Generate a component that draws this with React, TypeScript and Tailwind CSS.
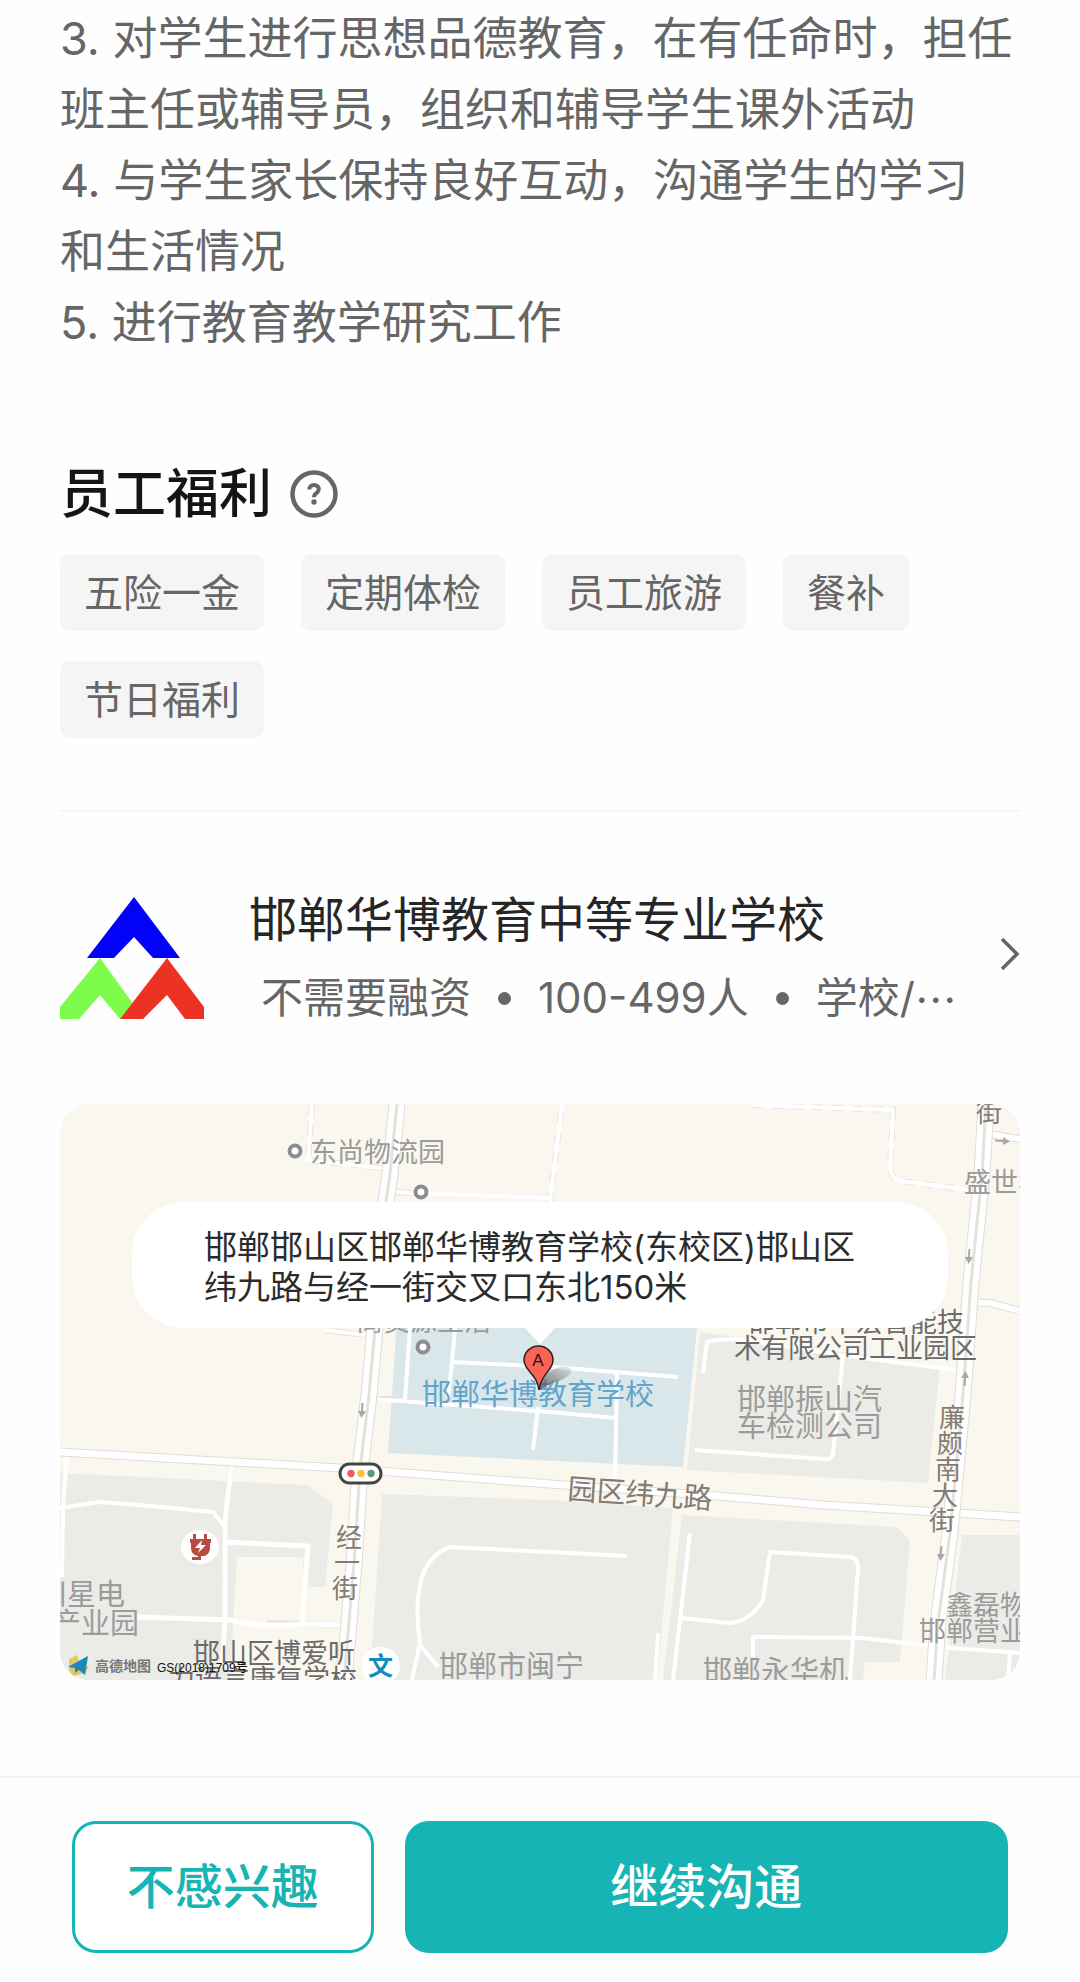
import type { ReactNode } from "react";

const duties = [
  "3. 对学生进行思想品德教育，在有任命时，担任班主任或辅导员，组织和辅导学生课外活动",
  "4. 与学生家长保持良好互动，沟通学生的学习\n和生活情况",
  "5. 进行教育教学研究工作",
];

const benefits = ["五险一金", "定期体检", "员工旅游", "餐补", "节日福利"];

function HelpIcon() {
  return (
    <svg viewBox="0 0 48 48" className="size-12" fill="none" stroke="#666" aria-hidden="true">
      <circle cx="24" cy="24" r="21.5" strokeWidth="4.5" />
      <path d="M19.300 19.6c0-2.900 2-4.700 4.700-4.700s4.700 1.700 4.700 4.300c0 2.1-1.1 3-2.6 4.1-1.5 1-2.1 1.800-2.1 3.900" strokeWidth="4" />
      <circle cx="24" cy="32" r="2.700" fill="#666" stroke="none" />
    </svg>
  );
}

function SchoolLogo() {
  return (
    <svg viewBox="0 0 144 123" className="w-36 shrink-0" aria-hidden="true">
      <path d="M74 0 120 61H93L74 40 54 61H27Z" fill="#0202f8" />
      <path d="M40 61 84 122H60L40 98 19 122H0V110Z" fill="#7dfc4b" />
      <path d="M107 61 144 110V122H125L107 98 83 122H60Z" fill="#ec3323" />
    </svg>
  );
}

function Road({ d, width = 16, center = true }: { d: string; width?: number; center?: boolean }) {
  return (
    <g fill="none">
      <path d={d} stroke="#dedcd5" strokeWidth={width} />
      <path d={d} stroke="#fff" strokeWidth={width - 2} />
      {center && <path d={d} stroke="#e4e2dc" strokeWidth={3} />}
    </g>
  );
}

function Arrow({ x, y, turn }: { x: number; y: number; turn: number }) {
  return (
    <path
      d="M-7 -1H1V-4L8 0 1 4V1H-7Z"
      fill="#a9a7a2"
      transform={`translate(${x} ${y}) rotate(${turn})`}
    />
  );
}

function Poi({ x, y }: { x: number; y: number }) {
  return <circle cx={x} cy={y} r="5.500" fill="#fff" stroke="#8b8d90" strokeWidth="4" />;
}

function MapLabels({ children, fill }: { children: ReactNode; fill: string }) {
  return (
    <g fill={fill} stroke="none">
      {children}
    </g>
  );
}

function CityMap() {
  return (
    <svg
      viewBox="0 0 960 576"
      className="block w-full font-['Noto_Sans_CJK_SC','Noto_Sans',sans-serif] text-[26px]"
      role="img"
      aria-label="公司位置地图"
    >
      <defs>
        <linearGradient id="pin-shadow" x1="0" y1="1" x2="1" y2="0">
          <stop offset="0" stopColor="#555" stopOpacity="0.900" />
          <stop offset="1" stopColor="#888" stopOpacity="0.150" />
        </linearGradient>
      </defs>
      <rect width="960" height="576" fill="#faf8ee" />

      <path d="M337 215H638L623 363 328 349Z" fill="#d9e6ea" />
      <g fill="#ebebe7">
        <path d="M640 228 880 262 868 379 627 366Z" />
        <path d="M0 369 247 381 273 399 265 483H243V453H177L170 576H0Z" />
        <path d="M322 390 490 396 613 404 597 576H310Z" />
        <path d="M622 411 837 423 850 436 840 558H805L803 576H603Z" />
        <path d="M902 431H960V576H885Z" />
      </g>

      <g fill="none" stroke="#e6e4dd" strokeWidth="6">
        <path d="M323 64 248 56 252 0" strokeDasharray="12 8" />
        <path d="M490 98 502 0M693 1 833 6 830 64Q831 74 840 77L910 86" strokeDasharray="10 10" />
        <path d="M265 226 305 231M335 88 353 89M313 295H345M280 521 207 519" />
        <path d="M172 358 165 416 165 516 162 560" strokeDasharray="14 8" />
      </g>
      <g fill="none" stroke="#fff" strokeWidth="4" strokeLinejoin="round">
        <path d="M323 64 248 56 252 0M265 226 305 231M335 88 353 89 490 94" />
        <path d="M490 98 502 0M693 1 833 6 830 64Q831 74 840 77L910 86" />
        <path d="M313 295 490 308 555 314M350 224 345 295M395 224 392 258 388 295M392 258 493 263 618 273M557 268 555 379M478 303 473 346" />
        <path d="M643 269 647 238Q660 234 687 236L780 251 897 266M783 251 773 350Q772 356 764 355L635 346" />
        <path d="M7 349 3 403 2 473M0 404 40 398 80 401 153 408 164 422" />
        <path d="M172 358 165 416 165 516 162 560M165 438 248 442 242 519M77 513 170 516Q200 524 240 520L285 521" strokeWidth="5" />
        <path d="M352 576 360 539Q354 500 362 473 370 450 390 443L490 448 567 452M360 541 378 563" />
        <path d="M630 429 613 576M622 514 670 519Q690 517 703 496L710 448 790 453Q799 455 798 465L790 576" />
        <path d="M693 553V533L803 534 877 543 960 549M598 529 595 576M950 549 948 576" />
      </g>

      <Road d="M0 348 280 364 490 380 657 392 763 401 960 413" width={9} center={false} />
      <Road d="M337 0 330 70 326 98 315 224 309 291 300 366 294 460 284 576" width={17} />
      <Road d="M929 30 960 35M908 198 930 199 960 207" width={8} center={false} />
      <Road d="M926 0 922 71 911 178 903 291 890 429 878 519 874 576" width={17} />

      <Arrow x={302} y={306} turn={94} />
      <Arrow x={942} y={37} turn={4} />
      <Arrow x={909} y={152} turn={94} />
      <Arrow x={905} y={275} turn={-86} />
      <Arrow x={881} y={449} turn={94} />

      <Poi x={235} y={47} />
      <Poi x={361} y={88} />
      <Poi x={363} y={243} />

      <MapLabels fill="#9b9b9b">
        <text x="250" y="58" fontSize="27">东尚物流园</text>
        <text x="904" y="88" fontSize="27">盛世华</text>
        <text x="296" y="227" fontSize="27">商贸源生活</text>
        <text x="677" y="306" fontSize="29">邯郸振山汽</text>
        <text x="677" y="333" fontSize="29">车检测公司</text>
        <text x="-22" y="501" fontSize="29">川星电</text>
        <text x="-8" y="530" fontSize="29">产业园</text>
        <text x="379" y="573" fontSize="29">邯郸市闽宁</text>
        <text x="643" y="578" fontSize="29">邯郸永华机</text>
        <text x="886" y="511" fontSize="27">鑫磊物</text>
        <text x="859" y="537" fontSize="27">邯郸营业</text>
      </MapLabels>
      <MapLabels fill="#6b6b6b">
        <text x="688" y="228" fontSize="27">邯郸市中宏智能技</text>
        <text x="674" y="254" fontSize="27">术有限公司工业园区</text>
        <text x="133" y="559" fontSize="27">邯山区博爱听</text>
        <text x="108" y="585" fontSize="27">力语言康复学校</text>
      </MapLabels>
      <MapLabels fill="#857b74">
        <text x="916" y="18">街</text>
        <text x="507" y="395" fontSize="29" transform="rotate(4 507 395)">园区纬九路</text>
        <text x="276" y="443">经</text>
        <text x="274" y="468">一</text>
        <text x="272" y="494">街</text>
        <text x="879" y="323">廉</text>
        <text x="877" y="349">颇</text>
        <text x="875" y="375">南</text>
        <text x="872" y="401">大</text>
        <text x="869" y="426">街</text>
      </MapLabels>
      <text x="362" y="301" fontSize="29" className="fill-[#62a5cb]">邯郸华博教育学校</text>

      <rect x="280" y="360" width="41" height="19" rx="9.500" fill="#fff" stroke="#444" strokeWidth="3" />
      <circle cx="291" cy="369.500" r="3.700" fill="#ee5a5f" />
      <circle cx="301" cy="369.500" r="3.700" fill="#f5c533" />
      <circle cx="311" cy="369.500" r="3.700" fill="#5d9c78" />

      <ellipse cx="140" cy="443" rx="19" ry="17" fill="#fff" />
      <path
        d="M133 430h3v5h8v-5h3v5h4v4h-1v6q-1 6-6 7h-3v4h-9v-3h6v-1q-6-1-7-7v-6h-1v-4h3z"
        fill="#b84c41"
      />
      <path d="M142 436 135 444H140L138 449 146 441H141Z" fill="#fff" />

      <circle cx="321" cy="562" r="19" fill="#fff" />
      <text x="308" y="571" fontSize="25" fontWeight="700" className="fill-[#158ac0]">文</text>

      <path d="M9 555 17 551 20 559 29 563 25 569 13 572 9 566Z" fill="#e5c766" />
      <path d="M8 563 28 552 25 571 19 566 15 569V564Z" fill="#1888bd" />
      <text x="35" y="567" fontSize="14" fontWeight="700" className="fill-[#777]">高德地图</text>
      <text x="97" y="568" fontSize="12" fontWeight="500" className="fill-[#111] font-['Liberation_Sans','Noto_Sans_CJK_SC',sans-serif]">
        GS(2018)1709号
      </text>

      <path d="M479 286Q484 268 497 264 509 260 512 267 508 275 492 279Z" fill="url(#pin-shadow)" />
      <path
        d="M479 286C477 269 464 267 464 256A14.500 14 0 0 1 493 256C493 267 481 269 479 286Z"
        fill="#fb6358"
        stroke="#31201f"
        strokeWidth="1.500"
      />
      <text x="478" y="262" fontSize="17" textAnchor="middle" className="font-['Liberation_Sans',sans-serif] fill-[#241312]">
        A
      </text>
    </svg>
  );
}

export default function App() {
  return (
    <div className="min-h-screen bg-[#fefefe] font-['Inter','Noto_Sans_CJK_SC',sans-serif] text-[#666]" lang="zh-CN">
      <main className="px-[60px] pb-24">
        <section className="pt-[3px] text-[45px] leading-[71px] whitespace-pre-line">
          {duties.map((duty) => (
            <p key={duty}>{duty}</p>
          ))}
        </section>

        <section className="pt-[104px]">
          <div className="flex items-center gap-[18px]">
            <h2 className="text-[53px] leading-[64px] font-medium text-[#151515]">员工福利</h2>
            <button type="button" aria-label="福利说明">
              <HelpIcon />
            </button>
          </div>
          <ul className="mt-7 flex flex-wrap gap-x-[37px] gap-y-[30px] text-[39px] leading-[77px]">
            {benefits.map((benefit) => (
              <li key={benefit} className="rounded-[10px] bg-[#f5f5f5] px-6">
                {benefit}
              </li>
            ))}
          </ul>
        </section>

        <hr className="mt-[72px] border-t-2 border-[#f5f5f5]" />

        <a href="#company" className="mt-[76px] flex items-center">
          <SchoolLogo />
          <div className="ml-[45px] min-w-0 flex-1">
            <h3 className="text-[48px] leading-[64px] text-[#262626]">邯郸华博教育中等专业学校</h3>
            <p className="mt-4 flex items-center pl-3 text-[42px] leading-[60px] whitespace-nowrap">
              <span>不需要融资</span>
              <span className="mx-[27px] size-[13px] rounded-full bg-[#666]" />
              <span>100-499人</span>
              <span className="mx-[27px] size-[13px] rounded-full bg-[#666]" />
              <span>学校/</span>
              <span className="font-['Noto_Sans_CJK_SC',sans-serif]">…</span>
            </p>
          </div>
          <svg viewBox="0 0 20 34" className="mb-2 w-5 shrink-0" fill="none" stroke="#666" strokeWidth="3.500" aria-hidden="true">
            <path d="M2 2 17 17 2 32" />
          </svg>
        </a>

        <section className="relative mt-[76px] overflow-hidden rounded-[28px]">
          <CityMap />
          <div className="absolute inset-x-[72px] top-[98px] flex flex-col items-center">
            <p className="w-full rounded-[52px] bg-white px-[72px] pt-[25px] pb-[21px] text-[33px] leading-[40px] text-[#2b2b2b]">
              邯郸邯山区邯郸华博教育学校(东校区)邯山区纬九路与经一街交叉口东北150米
            </p>
            <svg viewBox="0 0 30 16" className="w-[30px]" aria-hidden="true">
              <path d="M0 0H30L15 16Z" fill="#fff" />
            </svg>
          </div>
        </section>
      </main>

      <footer className="grid grid-cols-[1fr_2fr] gap-[31px] border-t-2 border-[#f1f1f1] px-[72px] pt-[43px] pb-[29px] text-[48px] leading-none font-medium">
        <button type="button" className="h-[132px] rounded-[24px] border-[3px] border-[#16b4b5] bg-white whitespace-nowrap text-[#16b4b5]">
          不感兴趣
        </button>
        <button type="button" className="h-[132px] rounded-[24px] bg-[#16b4b5] whitespace-nowrap text-white">
          继续沟通
        </button>
      </footer>
    </div>
  );
}
